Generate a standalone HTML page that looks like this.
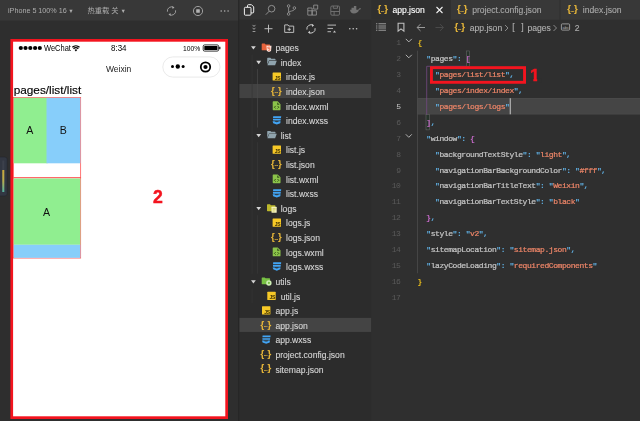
<!DOCTYPE html>
<html><head><meta charset="utf-8"><title>app.json</title>
<style>
html,body{margin:0;padding:0}
body{width:640px;height:421px;overflow:hidden;background:#2d2d2d;position:relative;font-family:"Liberation Sans","Noto Sans CJK SC",sans-serif;}
.a{position:absolute}
.t{position:absolute;white-space:pre;line-height:1}
.tree .t{font-size:8.6px;color:#d4d4d4;-webkit-text-stroke:0.12px}
.code .t{font-family:"Liberation Mono",monospace;font-size:8px;letter-spacing:-0.426px;color:#d4d4d4;-webkit-text-stroke:0.22px}
.ln{position:absolute;white-space:pre;line-height:1;font-family:"Liberation Mono",monospace;font-size:8px;letter-spacing:-0.426px;color:#5a5a5a;text-align:right;width:20px}
.k{color:#c4c4c4}.q{color:#62b4e8}.s{color:#ec8568}.p{color:#d4d4d4}.y{color:#eec11c}.m{color:#d36fd6}
svg{position:absolute;overflow:visible}
</style></head><body>
<svg style="left:0;top:0" width="640" height="421" viewBox="0 0 640 421">
<rect x="0" y="0" width="238.5" height="421" fill="#2e2e2e"/>
<rect x="0" y="0" width="238.5" height="20.5" fill="#383838"/>
<rect x="11.750" y="40.350" width="214.900" height="377.300" fill="#fff" stroke="#f3141f" stroke-width="2.700"/>
<rect x="162.800" y="56.900" width="57.200" height="20.200" rx="10.100" fill="#fff" stroke="#e4e4e4" stroke-width="0.800"/>
<rect x="13.450" y="97.450" width="67.200" height="80.300" fill="none" stroke="#f55" stroke-width="0.800"/>
<rect x="13.7" y="97.8" width="33.8" height="65.5" fill="#90ee90"/>
<rect x="46.5" y="97.8" width="33.8" height="65.5" fill="#87cefa"/>
<rect x="13.450" y="177.750" width="67.200" height="80.300" fill="none" stroke="#f55" stroke-width="0.800"/>
<rect x="13.7" y="178.5" width="66.6" height="66.3" fill="#90ee90"/>
<rect x="13.7" y="244.8" width="66.6" height="13" fill="#87cefa"/>
<rect x="-3" y="157" width="10.200" height="39" rx="2.500" fill="#323742" stroke="#23262d" stroke-width="0.600"/>
<defs><linearGradient id="vu" x1="0" y1="0" x2="0" y2="1"><stop offset="0" stop-color="#c9a83a"/><stop offset="0.500" stop-color="#b9ae4e"/><stop offset="1" stop-color="#4fb3a0"/></linearGradient></defs><rect x="2.300" y="160.500" width="2" height="31.500" fill="#3c414c"/><rect x="2.300" y="170" width="2" height="22" fill="url(#vu)"/>
<rect x="238.3" y="0" width="1.2" height="421" fill="#242424"/>
<rect x="239.5" y="0" width="131.8" height="421" fill="#2c2c2c"/>
<rect x="239.5" y="0" width="131.8" height="19.7" fill="#333333"/>
<rect x="239.5" y="83.96" width="131.8" height="14.1" fill="#424242"/>
<rect x="239.5" y="317.88" width="131.8" height="14.1" fill="#444444"/>
<rect x="251.7" y="54.46" width="0.7" height="219.3" fill="#353535"/>
<rect x="251.7" y="288.38" width="0.7" height="14.62" fill="#353535"/>
<rect x="257.1" y="69.08" width="0.7" height="58.48" fill="#4a4a4a"/>
<rect x="257.1" y="142.18" width="0.7" height="58.48" fill="#383838"/>
<rect x="257.1" y="215.28" width="0.7" height="58.48" fill="#383838"/>
<rect x="371.3" y="0" width="268.7" height="421" fill="#2f2f2f"/>
<rect x="371.3" y="0" width="268.7" height="19.7" fill="#383838"/>
<rect x="371.3" y="0" width="79.5" height="19.7" fill="#2f2f2f"/>
<rect x="559.6" y="0" width="0.8" height="19.7" fill="#2d2d2d"/>
<rect x="417.500" y="98" width="222.500" height="16.500" fill="#4a4a4a"/><rect x="417.500" y="98.800" width="222.500" height="14.900" fill="#454545"/>
<rect x="417.3" y="50.65" width="0.7" height="222.6" fill="#505050"/>
<rect x="466.400" y="50.95" width="3.300" height="15.30" fill="#26322a" stroke="#636363" stroke-width="0.600"/>
<rect x="426" y="114.55" width="3.300" height="15.30" fill="#26322a" stroke="#636363" stroke-width="0.600"/>
<path d="M466.200 66.300H426.700V114.55" fill="none" stroke="#734a83" stroke-width="0.800"/>
<rect x="509.750" y="98.200" width="0.950" height="16.100" fill="#d0d0d0"/>
<g transform="translate(166,5.5)"><path d="M1.4 6.2a4.150 4.150 0 0 1 6.500-4.100M9.600 4.800a4.150 4.150 0 0 1-6.500 4.100" fill="none" stroke="#a6a6a6" stroke-width="0.9"/><path d="M6.200 0.400l2.300 1.500-1.900 1.700zM4.800 10.600l-2.300-1.500 1.900-1.700z" fill="#a6a6a6"/></g>
<g transform="translate(192.5,5.5)"><circle cx="5.5" cy="5.500" r="4.600" fill="none" stroke="#a8a8a8" stroke-width="0.9"/><rect x="3.700" y="3.700" width="3.600" height="3.600" rx="0.500" fill="#b4b4b4"/></g>
<g transform="translate(219.7,9.5)"><circle cx="1.500" cy="1.500" r="0.800" fill="#b0b0b0"/><circle cx="5" cy="1.500" r="0.800" fill="#b0b0b0"/><circle cx="8.400" cy="1.500" r="0.800" fill="#b0b0b0"/></g>
<g transform="translate(18,45)"><circle cx="2.8" cy="3" r="2.1" fill="#000"/><circle cx="7.5" cy="3" r="2.1" fill="#000"/><circle cx="12.3" cy="3" r="2.1" fill="#000"/><circle cx="17.1" cy="3" r="2.1" fill="#000"/><circle cx="21.8" cy="3" r="2.1" fill="#000"/></g>
<g transform="translate(71.9,44.8)"><path d="M0.4 2.4a5.2 5.2 0 0 1 7.2 0M1.600 3.900a3.5 3.5 0 0 1 4.8 0" fill="none" stroke="#000" stroke-width="1.250"/><path d="M2.7 5.1a1.9 1.9 0 0 1 2.6 0L4 6.6z" fill="#000"/></g>
<g transform="translate(202.8,44.5)"><rect x="0.4" y="0.4" width="15.4" height="6.2" rx="1.4" fill="none" stroke="#000" stroke-width="0.8"/><rect x="1.5" y="1.5" width="13.2" height="4" rx="0.6" fill="#000"/><rect x="16.4" y="2.3" width="1.2" height="2.4" fill="#000"/></g>
<g transform="translate(170,63.5)"><circle cx="2.5" cy="3" r="1.5" fill="#000"/><circle cx="7.8" cy="3" r="2.2" fill="#000"/><circle cx="13.1" cy="3" r="1.5" fill="#000"/></g>
<g transform="translate(199.5,61)"><circle cx="6" cy="6" r="4.7" fill="none" stroke="#000" stroke-width="1.8"/><circle cx="6" cy="6" r="2.1" fill="#000"/></g>
<g transform="translate(243.5,4)"><path d="M4 3.100V1.600a.9.900 0 0 1 .9-.9h3.100l2.200 2.200v5.100a.9.900 0 0 1-.9.900H7.600" fill="none" stroke="#f2f2f2" stroke-width="1"/><rect x="0.900" y="3.300" width="6.600" height="7.900" rx="1" fill="none" stroke="#f2f2f2" stroke-width="1"/></g>
<g transform="translate(265,4.5)"><circle cx="6.6" cy="4.2" r="3.3" fill="none" stroke="#9a9a9a" stroke-width="0.9"/><path d="M4.3 6.6L0.8 10.2" stroke="#9a9a9a" stroke-width="0.9"/></g>
<g transform="translate(286,4)"><circle cx="2.6" cy="2" r="1.3" fill="none" stroke="#9a9a9a" stroke-width="0.8"/><circle cx="2.6" cy="10" r="1.3" fill="none" stroke="#9a9a9a" stroke-width="0.8"/><circle cx="8.4" cy="4" r="1.3" fill="none" stroke="#9a9a9a" stroke-width="0.8"/><path d="M2.6 3.3v5.4M8.400 5.3c0 2.200-5.800 1.300-5.800 3.400" fill="none" stroke="#9a9a9a" stroke-width="0.8"/></g>
<g transform="translate(307.3,4.6)"><path d="M0.500 3.400h4.300v7.100H0.500zM4.800 6.200h4.300v4.300H4.800zM0.500 6.200h4.300M6.400 0.500h4v4h-4z" fill="none" stroke="#9a9a9a" stroke-width="0.8"/></g>
<g transform="translate(330.3,5.5)"><rect x="0.500" y="0.500" width="8.700" height="9.200" rx="1.200" fill="none" stroke="#747474" stroke-width="0.900"/><path d="M0.500 6h8.700M3.800 6v3.700M3 0.500v2.300h4.200v-2.300" fill="none" stroke="#747474" stroke-width="0.900"/></g>
<g transform="translate(349.5,4.5)"><path d="M0.500 5.200h8.300c.3-1.500 1.600-1.900 2.800-1.300-.4.900-1.300 1.300-2.100 1.300-.6 2.600-2.600 3.800-5.100 3.800-2.400 0-3.700-1.400-3.900-3.800zM2 3.300h4.800v1.900H2zM4.400 1.400h2.400v1.900H4.400z" fill="#727272"/></g>
<g transform="translate(252,24.3)"><path d="M0.600 0.600L2 2.200 3.400 0.600M0.600 3.500L2 5.100 3.400 3.500M0.600 7.200h2.800" fill="none" stroke="#c8c8c8" stroke-width="0.7"/></g>
<g transform="translate(264,24.2)"><path d="M4.500 0.500v8M0.500 4.500h8" stroke="#c8c8c8" stroke-width="0.9"/></g>
<g transform="translate(284.2,24.1)"><path d="M0.500 0.800h3.300l.9 1.200h4.800v6.300h-9zM5 3.500v3.400M3.300 5.200h3.400" fill="none" stroke="#c8c8c8" stroke-width="0.9"/></g>
<g transform="translate(305.5,23.4)"><path d="M1.4 6.2a4.150 4.150 0 0 1 6.500-4.100M9.600 4.800a4.150 4.150 0 0 1-6.500 4.100" fill="none" stroke="#c8c8c8" stroke-width="1"/><path d="M6.200 0.400l2.300 1.500-1.900 1.700zM4.800 10.600l-2.300-1.500 1.900-1.700z" fill="#c8c8c8"/></g>
<g transform="translate(327,24.1)"><path d="M0.500 1h8.500M0.500 4.300h5.500M0.500 7.600h3.500" stroke="#c8c8c8" stroke-width="0.900"/><path d="M6 8.300l1.500-2 1.500 2z" fill="#c8c8c8"/></g>
<g transform="translate(347.5,27.3)"><circle cx="2.300" cy="1.500" r="0.800" fill="#c8c8c8"/><circle cx="5.700" cy="1.500" r="0.800" fill="#c8c8c8"/><circle cx="9.100" cy="1.500" r="0.800" fill="#c8c8c8"/></g>
<g transform="translate(250.9,45.95)"><path d="M0.100 0.300h4.800L2.500 3.600z" fill="#d6d6d6"/></g>
<g transform="translate(261.5,43.25)"><path d="M0.200 0.900a.6.6 0 0 1 .6-.6h2.400l.9.900h3.900a.6.6 0 0 1 .6.600v4.700a.6.6 0 0 1-.6.600H0.800a.6.600 0 0 1-.6-.6z" fill="#e8643c"/><path d="M4.900 2.600h5.100l-.5 5.100-2.050 1-2.050-1z" fill="#ffe3da"/><path d="M8.600 3.900H6.300l.1 1.300h2l-.15 1.700-.8.350-.8-.350" fill="none" stroke="#e8643c" stroke-width="0.700"/></g>
<g transform="translate(256.2,60.57)"><path d="M0.100 0.300h4.800L2.500 3.600z" fill="#d6d6d6"/></g>
<g transform="translate(266.9,57.57)"><path d="M0.300 0.900a.6.6 0 0 1 .6-.6h2.600l.9.900h3.600a.6.6 0 0 1 .6.600v1H2.200L0.300 7z" fill="#90a4ae"/><path d="M2.400 3.200h7.500L8.200 7.700H0.500z" fill="#90a4ae"/></g>
<g transform="translate(272.4,72.19)"><rect width="8.400" height="8.200" x="0.200" y="0.200" rx="0.500" fill="#f7c927"/></g>
<g transform="translate(272.6,101.23)"><path d="M0.100 0.800a.7.700 0 0 1 .7-.7h4.300l2.800 2.800v5.300a.7.700 0 0 1-.7.700H0.800a.7.700 0 0 1-.7-.7z" fill="#8bc34a"/><path d="M3.100 4.700L1.800 6l1.300 1.300M4.900 4.700L6.200 6 4.900 7.300" fill="none" stroke="#2c4a10" stroke-width="0.900"/><path d="M4.600 0.900v2.500h2.500z" fill="#33501a"/></g>
<g transform="translate(272.3,115.95)"><path d="M0.900 0.200h8l-.2 1.900h-8zM0.600 2.900h7.900l-.2 1.700H0.800zM0.300 5.300h8l-.3 1.900-3.500 1.300-3.600-1.300z" fill="#42a5f5"/><path d="M2.500 5.200h3.800l-.1.700-1.700.4-1.900-.4z" fill="#2b2b2b"/></g>
<g transform="translate(256.2,133.67)"><path d="M0.100 0.300h4.800L2.500 3.600z" fill="#d6d6d6"/></g>
<g transform="translate(266.9,130.67)"><path d="M0.300 0.900a.6.6 0 0 1 .6-.6h2.600l.9.900h3.600a.6.6 0 0 1 .6.600v1H2.200L0.300 7z" fill="#90a4ae"/><path d="M2.400 3.200h7.500L8.200 7.700H0.500z" fill="#90a4ae"/></g>
<g transform="translate(272.4,145.29)"><rect width="8.400" height="8.200" x="0.200" y="0.200" rx="0.500" fill="#f7c927"/></g>
<g transform="translate(272.6,174.33)"><path d="M0.100 0.800a.7.700 0 0 1 .7-.7h4.300l2.800 2.800v5.300a.7.700 0 0 1-.7.700H0.800a.7.700 0 0 1-.7-.7z" fill="#8bc34a"/><path d="M3.100 4.700L1.800 6l1.300 1.300M4.900 4.700L6.200 6 4.900 7.300" fill="none" stroke="#2c4a10" stroke-width="0.900"/><path d="M4.600 0.900v2.500h2.500z" fill="#33501a"/></g>
<g transform="translate(272.3,189.05)"><path d="M0.900 0.200h8l-.2 1.900h-8zM0.600 2.900h7.900l-.2 1.700H0.800zM0.300 5.300h8l-.3 1.900-3.500 1.300-3.600-1.300z" fill="#42a5f5"/><path d="M2.500 5.200h3.800l-.1.700-1.700.4-1.900-.4z" fill="#2b2b2b"/></g>
<g transform="translate(256.2,206.77)"><path d="M0.100 0.300h4.800L2.500 3.600z" fill="#d6d6d6"/></g>
<g transform="translate(266.8,204.07)"><path d="M0.200 0.900a.6.6 0 0 1 .6-.6h2.400l.9.900h3.900a.6.6 0 0 1 .6.600v4.700a.6.6 0 0 1-.6.600H0.800a.6.600 0 0 1-.6-.6z" fill="#bdb92c"/><rect x="4.700" y="2.800" width="5.200" height="5.800" rx="0.500" fill="#f3f1bd"/><path d="M5.800 4.400h3M5.800 5.700h3M5.800 7h2" stroke="#bdb92c" stroke-width="0.600" opacity="0.8"/></g>
<g transform="translate(272.4,218.39)"><rect width="8.400" height="8.200" x="0.200" y="0.200" rx="0.500" fill="#f7c927"/></g>
<g transform="translate(272.6,247.43)"><path d="M0.100 0.800a.7.700 0 0 1 .7-.7h4.300l2.800 2.800v5.300a.7.700 0 0 1-.7.700H0.800a.7.700 0 0 1-.7-.7z" fill="#8bc34a"/><path d="M3.100 4.700L1.800 6l1.300 1.300M4.900 4.700L6.200 6 4.900 7.300" fill="none" stroke="#2c4a10" stroke-width="0.900"/><path d="M4.600 0.900v2.500h2.500z" fill="#33501a"/></g>
<g transform="translate(272.3,262.15)"><path d="M0.900 0.200h8l-.2 1.900h-8zM0.600 2.900h7.900l-.2 1.700H0.800zM0.300 5.300h8l-.3 1.900-3.500 1.300-3.600-1.300z" fill="#42a5f5"/><path d="M2.500 5.200h3.800l-.1.700-1.700.4-1.900-.4z" fill="#2b2b2b"/></g>
<g transform="translate(250.9,279.87)"><path d="M0.100 0.300h4.800L2.500 3.600z" fill="#d6d6d6"/></g>
<g transform="translate(261.5,277.17)"><path d="M0.200 0.900a.6.6 0 0 1 .6-.6h2.400l.9.900h3.900a.6.6 0 0 1 .6.600v4.700a.6.6 0 0 1-.6.600H0.800a.6.600 0 0 1-.6-.6z" fill="#78c144"/><circle cx="7.400" cy="5.800" r="2.700" fill="#cdeeb4"/><circle cx="7.400" cy="5.800" r="1.100" fill="#78c144"/></g>
<g transform="translate(267.1,291.49)"><rect width="8.400" height="8.200" x="0.200" y="0.200" rx="0.500" fill="#f7c927"/></g>
<g transform="translate(261.8,306.11)"><rect width="8.400" height="8.200" x="0.200" y="0.200" rx="0.500" fill="#f7c927"/></g>
<g transform="translate(261.7,335.25)"><path d="M0.900 0.200h8l-.2 1.900h-8zM0.600 2.900h7.900l-.2 1.700H0.800zM0.300 5.300h8l-.3 1.900-3.500 1.300-3.600-1.300z" fill="#42a5f5"/><path d="M2.500 5.200h3.800l-.1.700-1.700.4-1.900-.4z" fill="#2b2b2b"/></g>
<g transform="translate(436,6.5)"><path d="M0.500 0.500l6 6M6.500 0.500l-6 6" stroke="#f0f0f0" stroke-width="1.100"/></g>
<g transform="translate(376,23) scale(1.111,1)"><path d="M0 0.700h1.200M2.200 0.700h6.800M0 2.900h1.200M2.200 2.900h6.800M0 5.100h1.200M2.200 5.100h6.800M0 7.300h1.200M2.200 7.300h6.800" stroke="#9a9a9a" stroke-width="1"/></g>
<g transform="translate(397.5,22.7)"><path d="M0.600 0.500h5.800v8L3.500 6.200 0.600 8.500z" fill="none" stroke="#c0c0c0" stroke-width="1.100"/></g>
<g transform="translate(416.5,23.5)"><path d="M8.500 4H0.800M4 0.600L0.600 4 4 7.400" fill="none" stroke="#a8a8a8" stroke-width="0.900"/></g>
<g transform="translate(435,23.5)"><path d="M0.500 4h7.700M5 0.600L8.400 4 5 7.400" fill="none" stroke="#4e4e4e" stroke-width="0.900"/></g>
<g transform="translate(504.5,24.5)"><path d="M0.500 0.500l3 3-3 3" fill="none" stroke="#a0a0a0" stroke-width="0.800"/></g>
<g transform="translate(553,24.5)"><path d="M0.500 0.500l3 3-3 3" fill="none" stroke="#a0a0a0" stroke-width="0.800"/></g>
<g transform="translate(561,23.5)"><rect x="0.400" y="0.400" width="8.200" height="6.200" rx="0.800" fill="none" stroke="#b0b0b0" stroke-width="0.800"/><text x="1.500" y="5.200" font-family="Liberation Sans,sans-serif" font-size="4px" fill="#b0b0b0">abc</text></g>
<g transform="translate(405.3,38.2)"><path d="M0.500 0.700l3 3 3-3" fill="none" stroke="#c0c0c0" stroke-width="0.900"/></g>
<g transform="translate(405.3,54.1)"><path d="M0.500 0.700l3 3 3-3" fill="none" stroke="#c0c0c0" stroke-width="0.900"/></g>
<g transform="translate(405.3,133.6)"><path d="M0.500 0.700l3 3 3-3" fill="none" stroke="#c0c0c0" stroke-width="0.900"/></g>
</svg>
<div class="a" style="left:0;top:0;width:640px;height:421px;will-change:transform">
<div class="t" style="left:8px;top:7.4px;font-size:7.2px;color:#adadad">iPhone 5 100% 16<span style="font-size:5.5px;position:relative;top:0;margin-left:1.400px">▼</span></div>
<div class="t" style="left:87.4px;top:6.6px;font-size:7.3px;color:#adadad">热重载 关<span style="font-size:5.5px;position:relative;top:0;margin-left:1.800px">▼</span></div>
<div class="t" style="left:44.200px;top:44.300px;font-size:8.400px;color:#000;transform:scaleX(0.895);transform-origin:0 0">WeChat</div>
<div class="t" style="left:111.400px;top:44.300px;font-size:8.400px;color:#000;transform:scaleX(0.950);transform-origin:0 0">8:34</div>
<div class="t" style="left:182.600px;top:44.600px;font-size:7.800px;color:#000;transform:scaleX(0.865);transform-origin:0 0">100%</div>
<div class="t" style="left:106px;top:65px;font-size:8.5px;color:#222">Weixin</div>
<div class="t" style="left:13.7px;top:84.6px;font-size:11.8px;color:#000;-webkit-text-stroke:0.150px #000">pages/list/list</div>
<div class="t" style="left:26.2px;top:125.4px;font-size:10.6px;color:#111">A</div>
<div class="t" style="left:59.7px;top:125.4px;font-size:10.6px;color:#111">B</div>
<div class="t" style="left:42.9px;top:207px;font-size:10.6px;color:#111">A</div>
<div class="t" style="left:153px;top:188.5px;font-size:17.600px;font-weight:bold;color:#f3141f;-webkit-text-stroke:0.500px #f3141f">2</div>
<div class="tree">
<div class="t" style="left:275.40px;top:44.05px">pages</div>
<div class="t" style="left:280.70px;top:58.67px">index</div>
<div class="t" style="left:274.80px;top:76.09px;font-size:5px;font-weight:bold;color:#3d3000;letter-spacing:-0.300px;-webkit-text-stroke:0">JS</div>
<div class="t" style="left:286.00px;top:73.29px">index.js</div>
<div class="t" style="left:271.10px;top:85.61px;font-size:9.500px;font-weight:bold;color:#e8b73a;letter-spacing:-0.400px;font-family:'Liberation Sans',sans-serif">{<span style="font-size:5px;position:relative;top:-0.300px;letter-spacing:-0.200px">...</span>}</div>
<div class="t" style="left:286.00px;top:87.91px">index.json</div>
<div class="t" style="left:286.00px;top:102.53px">index.wxml</div>
<div class="t" style="left:286.00px;top:117.15px">index.wxss</div>
<div class="t" style="left:280.70px;top:131.77px">list</div>
<div class="t" style="left:274.80px;top:149.19px;font-size:5px;font-weight:bold;color:#3d3000;letter-spacing:-0.300px;-webkit-text-stroke:0">JS</div>
<div class="t" style="left:286.00px;top:146.39px">list.js</div>
<div class="t" style="left:271.10px;top:158.71px;font-size:9.500px;font-weight:bold;color:#e8b73a;letter-spacing:-0.400px;font-family:'Liberation Sans',sans-serif">{<span style="font-size:5px;position:relative;top:-0.300px;letter-spacing:-0.200px">...</span>}</div>
<div class="t" style="left:286.00px;top:161.01px">list.json</div>
<div class="t" style="left:286.00px;top:175.63px">list.wxml</div>
<div class="t" style="left:286.00px;top:190.25px">list.wxss</div>
<div class="t" style="left:280.70px;top:204.87px">logs</div>
<div class="t" style="left:274.80px;top:222.29px;font-size:5px;font-weight:bold;color:#3d3000;letter-spacing:-0.300px;-webkit-text-stroke:0">JS</div>
<div class="t" style="left:286.00px;top:219.49px">logs.js</div>
<div class="t" style="left:271.10px;top:231.81px;font-size:9.500px;font-weight:bold;color:#e8b73a;letter-spacing:-0.400px;font-family:'Liberation Sans',sans-serif">{<span style="font-size:5px;position:relative;top:-0.300px;letter-spacing:-0.200px">...</span>}</div>
<div class="t" style="left:286.00px;top:234.11px">logs.json</div>
<div class="t" style="left:286.00px;top:248.73px">logs.wxml</div>
<div class="t" style="left:286.00px;top:263.35px">logs.wxss</div>
<div class="t" style="left:275.40px;top:277.97px">utils</div>
<div class="t" style="left:269.50px;top:295.39px;font-size:5px;font-weight:bold;color:#3d3000;letter-spacing:-0.300px;-webkit-text-stroke:0">JS</div>
<div class="t" style="left:280.70px;top:292.59px">util.js</div>
<div class="t" style="left:264.20px;top:310.01px;font-size:5px;font-weight:bold;color:#3d3000;letter-spacing:-0.300px;-webkit-text-stroke:0">JS</div>
<div class="t" style="left:275.40px;top:307.21px">app.js</div>
<div class="t" style="left:260.50px;top:319.53px;font-size:9.500px;font-weight:bold;color:#e8b73a;letter-spacing:-0.400px;font-family:'Liberation Sans',sans-serif">{<span style="font-size:5px;position:relative;top:-0.300px;letter-spacing:-0.200px">...</span>}</div>
<div class="t" style="left:275.40px;top:321.83px">app.json</div>
<div class="t" style="left:275.40px;top:336.45px">app.wxss</div>
<div class="t" style="left:260.50px;top:348.77px;font-size:9.500px;font-weight:bold;color:#e8b73a;letter-spacing:-0.400px;font-family:'Liberation Sans',sans-serif">{<span style="font-size:5px;position:relative;top:-0.300px;letter-spacing:-0.200px">...</span>}</div>
<div class="t" style="left:275.40px;top:351.07px">project.config.json</div>
<div class="t" style="left:260.50px;top:363.39px;font-size:9.500px;font-weight:bold;color:#e8b73a;letter-spacing:-0.400px;font-family:'Liberation Sans',sans-serif">{<span style="font-size:5px;position:relative;top:-0.300px;letter-spacing:-0.200px">...</span>}</div>
<div class="t" style="left:275.40px;top:365.69px">sitemap.json</div>
</div>
<div class="tree">
<div class="t" style="left:377.40px;top:4.40px;font-size:9.500px;font-weight:bold;color:#e8b73a;letter-spacing:-0.400px;font-family:'Liberation Sans',sans-serif">{<span style="font-size:5px;position:relative;top:-0.300px;letter-spacing:-0.200px">...</span>}</div>
<div class="t" style="left:392.400px;top:6.1px;color:#fff">app.json</div>
<div class="t" style="left:456.90px;top:4.40px;font-size:9.500px;font-weight:bold;color:#e8b73a;letter-spacing:-0.400px;font-family:'Liberation Sans',sans-serif">{<span style="font-size:5px;position:relative;top:-0.300px;letter-spacing:-0.200px">...</span>}</div>
<div class="t" style="left:472.200px;top:6.1px;color:#a8a8a8">project.config.json</div>
<div class="t" style="left:567.20px;top:4.40px;font-size:9.500px;font-weight:bold;color:#e8b73a;letter-spacing:-0.400px;font-family:'Liberation Sans',sans-serif">{<span style="font-size:5px;position:relative;top:-0.300px;letter-spacing:-0.200px">...</span>}</div>
<div class="t" style="left:582.800px;top:6.1px;color:#a8a8a8">index.json</div>
<div class="t" style="left:454.40px;top:21.90px;font-size:9.500px;font-weight:bold;color:#e8b73a;letter-spacing:-0.400px;font-family:'Liberation Sans',sans-serif">{<span style="font-size:5px;position:relative;top:-0.300px;letter-spacing:-0.200px">...</span>}</div>
<div class="t" style="left:469.700px;top:23.500px;color:#b0b0b0">app.json</div>
<div class="t" style="left:512.300px;top:23.200px;color:#b0b0b0;word-spacing:4.200px">[ ]</div>
<div class="t" style="left:527.500px;top:23.500px;color:#b0b0b0">pages</div>
<div class="t" style="left:574.800px;top:23.500px;color:#b0b0b0">2</div>
</div>
<div class="code">
<div class="ln" style="left:380.500px;top:39.30px;color:#5a5a5a">1</div>
<div class="t" style="left:417.60px;top:39.30px"><span class="y">{</span></div>
<div class="ln" style="left:380.500px;top:55.20px;color:#5a5a5a">2</div>
<div class="t" style="left:426.35px;top:55.20px"><span class="q">"</span><span class="k">pages</span><span class="q">"</span><span class="q">:</span> <span class="m">[</span></div>
<div class="ln" style="left:380.500px;top:71.10px;color:#5a5a5a">3</div>
<div class="t" style="left:435.10px;top:71.10px"><span class="q">"</span><span class="s">pages/list/list</span><span class="q">"</span><span class="q">,</span></div>
<div class="ln" style="left:380.500px;top:87.00px;color:#5a5a5a">4</div>
<div class="t" style="left:435.10px;top:87.00px"><span class="q">"</span><span class="s">pages/index/index</span><span class="q">"</span><span class="q">,</span></div>
<div class="ln" style="left:380.500px;top:102.90px;color:#c6c6c6">5</div>
<div class="t" style="left:435.10px;top:102.90px"><span class="q">"</span><span class="s">pages/logs/logs</span><span class="q">"</span></div>
<div class="ln" style="left:380.500px;top:118.80px;color:#5a5a5a">6</div>
<div class="t" style="left:426.35px;top:118.80px"><span class="m">]</span><span class="q">,</span></div>
<div class="ln" style="left:380.500px;top:134.70px;color:#5a5a5a">7</div>
<div class="t" style="left:426.35px;top:134.70px"><span class="q">"</span><span class="k">window</span><span class="q">"</span><span class="q">:</span> <span class="m">{</span></div>
<div class="ln" style="left:380.500px;top:150.60px;color:#5a5a5a">8</div>
<div class="t" style="left:435.10px;top:150.60px"><span class="q">"</span><span class="k">backgroundTextStyle</span><span class="q">"</span><span class="q">:</span> <span class="q">"</span><span class="s">light</span><span class="q">"</span><span class="q">,</span></div>
<div class="ln" style="left:380.500px;top:166.50px;color:#5a5a5a">9</div>
<div class="t" style="left:435.10px;top:166.50px"><span class="q">"</span><span class="k">navigationBarBackgroundColor</span><span class="q">"</span><span class="q">:</span> <span class="q">"</span><span class="s">#fff</span><span class="q">"</span><span class="q">,</span></div>
<div class="ln" style="left:380.500px;top:182.40px;color:#5a5a5a">10</div>
<div class="t" style="left:435.10px;top:182.40px"><span class="q">"</span><span class="k">navigationBarTitleText</span><span class="q">"</span><span class="q">:</span> <span class="q">"</span><span class="s">Weixin</span><span class="q">"</span><span class="q">,</span></div>
<div class="ln" style="left:380.500px;top:198.30px;color:#5a5a5a">11</div>
<div class="t" style="left:435.10px;top:198.30px"><span class="q">"</span><span class="k">navigationBarTextStyle</span><span class="q">"</span><span class="q">:</span> <span class="q">"</span><span class="s">black</span><span class="q">"</span></div>
<div class="ln" style="left:380.500px;top:214.20px;color:#5a5a5a">12</div>
<div class="t" style="left:426.35px;top:214.20px"><span class="m">}</span><span class="q">,</span></div>
<div class="ln" style="left:380.500px;top:230.10px;color:#5a5a5a">13</div>
<div class="t" style="left:426.35px;top:230.10px"><span class="q">"</span><span class="k">style</span><span class="q">"</span><span class="q">:</span> <span class="q">"</span><span class="s">v2</span><span class="q">"</span><span class="q">,</span></div>
<div class="ln" style="left:380.500px;top:246.00px;color:#5a5a5a">14</div>
<div class="t" style="left:426.35px;top:246.00px"><span class="q">"</span><span class="k">sitemapLocation</span><span class="q">"</span><span class="q">:</span> <span class="q">"</span><span class="s">sitemap.json</span><span class="q">"</span><span class="q">,</span></div>
<div class="ln" style="left:380.500px;top:261.90px;color:#5a5a5a">15</div>
<div class="t" style="left:426.35px;top:261.90px"><span class="q">"</span><span class="k">lazyCodeLoading</span><span class="q">"</span><span class="q">:</span> <span class="q">"</span><span class="s">requiredComponents</span><span class="q">"</span></div>
<div class="ln" style="left:380.500px;top:277.80px;color:#5a5a5a">16</div>
<div class="t" style="left:417.60px;top:277.80px"><span class="y">}</span></div>
<div class="ln" style="left:380.500px;top:293.70px;color:#5a5a5a">17</div>
<div class="t" style="left:529.900px;top:67px;font-family:'Liberation Sans',sans-serif;font-size:17.300px;font-weight:bold;color:#f3141f;letter-spacing:0;-webkit-text-stroke:0.500px #f3141f">1</div>
</div>
</div>
<svg style="left:0;top:0" width="640" height="421" viewBox="0 0 640 421">
<rect x="431.450" y="67.650" width="93.100" height="14.650" fill="none" stroke="#f3141f" stroke-width="2.900"/>
<rect x="529" y="78.400" width="4.300" height="4" fill="#2f2f2f"/><rect x="537.200" y="78.400" width="4" height="4" fill="#2f2f2f"/>
</svg>
</body></html>
